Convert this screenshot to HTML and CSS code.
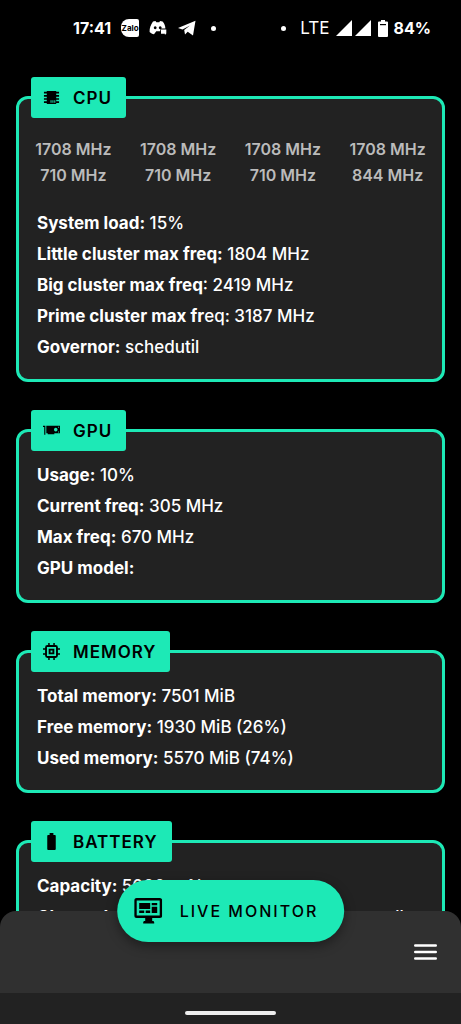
FILE: index.html
```html
<!DOCTYPE html>
<html lang="en">
<head>
<meta charset="utf-8">
<meta name="viewport" content="width=device-width, initial-scale=1">
<title>Device monitor</title>
<link rel="stylesheet" href="styles.css">
</head>
<body>
<div class="app">
  <header class="status">
    <div class="status-group status-left">
      <time>17:41</time>
      <span class="zalo">Zalo</span>
      <svg class="icon-discord" viewBox="0 0 18 16" aria-hidden="true"><path fill="#fff" fill-rule="evenodd" d="M4 1.500L6.500 1l.8 1.200h3L11 1l2.600.6c1.800 2 2.700 4.300 2.800 6.900h-3.900L11.200 9.800v1.400H7.300L5 14.300C3.300 14 1.800 13.200.6 12 .5 8 1.700 4.600 4 1.500zM6.200 6.200a1.400 1.500 0 1 0 .01 0zM11.200 6.200a1.400 1.500 0 1 0 .01 0z"/><path fill="#fff" d="M12 9.500h5.300v4l-1.400 1.600v-1.300H12z"/></svg>
      <svg class="icon-telegram" viewBox="0 0 20 16" aria-hidden="true"><path fill="#fff" d="M1 8L18.500.7 16 15.500 10.700 11.800 8 14.500 7.200 10 13 5.500 5.500 9.500z"/></svg>
      <span class="dot"></span>
    </div>
    <div class="status-group status-right">
      <span class="dot"></span>
      <span class="network">LTE</span>
      <svg class="icon-signal" viewBox="0 0 36 16" aria-hidden="true"><path fill="#fff" d="M0 16L16 0v16zM19 16L35 0v16z"/></svg>
      <svg class="icon-charge" viewBox="0 0 10 17" aria-hidden="true"><path fill="#fff" d="M3 0h4v1.500h2q1 0 1 1V16q0 1-1 1H1q-1 0-1-1V2.500q0-1 1-1h2z"/><path fill="#000" d="M2 4h6v1.200H2z"/></svg>
      <span>84%</span>
    </div>
  </header>

  <main class="content">
    <section class="card card-cpu">
      <h2 class="tag"><svg viewBox="0 0 18 18" aria-hidden="true"><path d="M4 2h10v14H4zM1 3h16v1.800H1zM1 6.300h16v1.800H1zM1 9.700h16v1.800H1zM1 13h16v1.800H1z"/><path fill="#1de9b6" d="M8 12h1v2.500H8zM10 12h1v2.500h-1zM12 12h1v2.500h-1z"/></svg>CPU</h2>
      <ul class="cores">
        <li>1708 MHz</li><li>1708 MHz</li><li>1708 MHz</li><li>1708 MHz</li>
        <li>710 MHz</li><li>710 MHz</li><li>710 MHz</li><li>844 MHz</li>
      </ul>
      <div class="rows">
        <p><b>System load:</b> 15%</p>
        <p><b>Little cluster max freq:</b> 1804 MHz</p>
        <p><b>Big cluster max freq</b>: 2419 MHz</p>
        <p><b>Prime cluster max fr</b>eq: 3187 MHz</p>
        <p><b>Governor:</b> schedutil</p>
      </div>
    </section>

    <section class="card">
      <h2 class="tag"><svg viewBox="0 0 18 18" aria-hidden="true"><path fill-rule="evenodd" d="M0 4h2.500v9.500H1.300V5.200H0zM3.500 4H18v8h-6v1H5v-1H3.500zM13.500 6.200a1.900 1.900 0 1 0 .01 0zM16 5h1v1h-1zM16 10h1v1h-1z"/></svg>GPU</h2>
      <div class="rows">
        <p><b>Usage:</b> 10%</p>
        <p><b>Current freq:</b> 305 MHz</p>
        <p><b>Max freq:</b> 670 MHz</p>
        <p><b>GPU model:</b></p>
      </div>
    </section>

    <section class="card">
      <h2 class="tag"><svg viewBox="0 0 18 18" aria-hidden="true"><path fill-rule="evenodd" d="M5.500 0h1.600v2.200h3.800V0h1.600v2.200h.8q2.500 0 2.500 2.500v.8H18v1.600h-2.200v3.800H18v1.600h-2.200v.8q0 2.500-2.500 2.500h-.8V18h-1.600v-2.200H7.100V18H5.500v-2.200h-.8q-2.500 0-2.500-2.500v-.8H0v-1.600h2.200V7.100H0V5.500h2.200v-.8q0-2.500 2.500-2.500h.8zM4.200 4.200v9.600h9.600V4.200zM6 6h6v6H6zM8 8v2h2V8z"/></svg>MEMORY</h2>
      <div class="rows">
        <p><b>Total memory:</b> 7501 MiB</p>
        <p><b>Free memory:</b> 1930 MiB (26%)</p>
        <p><b>Used memory:</b> 5570 MiB (74%)</p>
      </div>
    </section>

    <section class="card">
      <h2 class="tag"><svg viewBox="0 0 18 18" aria-hidden="true"><path d="M7 0h4v2h1.500q1 0 1 1v14q0 1-1 1h-7q-1 0-1-1V3q0-1 1-1H7z"/></svg>BATTERY</h2>
      <div class="rows">
        <p><b>Capacity:</b> 5000 mAh</p>
        <p><b>Charged capacity:</b> 4200 mAh (84%) manually</p>
      </div>
    </section>
  </main>

  <footer class="dock">
    <button class="live" type="button">
      <svg viewBox="0 0 28 26" aria-hidden="true"><path fill-rule="evenodd" d="M2.500 0h23Q28 0 28 2.500v15q0 2.500-2.500 2.500H18v3h1q1 0 1 1.500V25.500H9V24.500Q9 23 10 23h1v-3H2.500Q0 20 0 17.500v-15Q0 0 2.500 0zM2.500 2.500v15h23v-15z"/><path d="M5 5h11v6H5zM17.500 5H23v2.200h-5.500zM17.500 8.700H23V15h-5.500zM5 12.500h5V15H5zM11.500 12.500H16V15h-4.500z"/></svg>
      LIVE MONITOR
    </button>
    <button class="menu" type="button" aria-label="Menu"><svg viewBox="0 0 23 16" aria-hidden="true"><path fill="none" stroke="#fff" stroke-width="2.400" stroke-linecap="round" d="M1.200 1.500h20.600M1.200 8h20.600M1.200 14.500h20.600"/></svg></button>
  </footer>
  <div class="gesture"><span></span></div>
</div>
</body>
</html>
```

FILE: styles.css
```css
* {
  box-sizing: border-box;
}

body {
  margin: 0;
  background: #000;
  color: #fff;
  font-family: Inter, "Open Sans", sans-serif;
  font-size: 16px;
}

.app {
  display: flex;
  flex-direction: column;
  height: 100vh;
}

.status {
  flex: none;
  display: flex;
  justify-content: space-between;
  align-items: center;
  height: 56px;
  padding: 0 30px 0 73px;
  font-weight: 700;
}

.status-group {
  display: flex;
  align-items: center;
}

.status-left {
  gap: 10px;
}

.status-right {
  gap: 6px;
}

.status-right .dot {
  margin-right: 8px;
}

.dot {
  width: 5px;
  height: 5px;
  margin-left: 4px;
  border-radius: 50%;
  background: #fff;
}

.zalo {
  width: 18px;
  border-radius: 8px 2px 2px 8px;
  background: #fff;
  color: #000;
  font-size: 8px;
  line-height: 18px;
  text-align: center;
}

.network {
  font-size: 17px;
  font-weight: 400;
}

.icon-discord {
  width: 18px;
  height: 16px;
}

.icon-telegram {
  width: 20px;
  height: 16px;
}

.icon-signal {
  width: 36px;
  height: 16px;
}

.icon-charge {
  width: 10px;
  height: 17px;
}

.content {
  flex: 1;
  min-height: 0;
  overflow-y: auto;
  scrollbar-width: none;
  padding: 40px 16px 0;
}

.card {
  position: relative;
  margin-bottom: 47px;
  padding: 28px 0 16px;
  border: 3px solid #1de9b6;
  border-radius: 12px;
  background: #222;
}

.card-cpu {
  padding: 37px 0 16px;
}

.tag {
  position: absolute;
  top: -22px;
  left: 12px;
  display: flex;
  align-items: center;
  gap: 13px;
  height: 41px;
  margin: 0;
  padding: 0 14px 0 12px;
  border-radius: 3px;
  background: #1de9b6;
  color: #000;
  font-size: 17px;
  font-weight: 600;
  letter-spacing: 1px;
}

.tag svg {
  width: 17px;
  height: 17px;
}

.cores {
  display: grid;
  grid-template-columns: repeat(4, 1fr);
  margin: 0 2px 20px;
  padding: 0;
  color: #bbb;
  font-weight: 600;
  line-height: 26px;
  list-style: none;
  text-align: center;
}

.rows {
  padding: 0 18px;
  font-size: 17px;
  font-weight: 500;
  line-height: 31px;
}

.rows p {
  margin: 0;
}

.rows b {
  font-weight: 700;
}

.dock {
  position: relative;
  flex: none;
  display: flex;
  align-items: center;
  justify-content: flex-end;
  height: 82px;
  margin-top: -16px;
  padding: 0 24px;
  border-radius: 16px 16px 0 0;
  background: #303030;
}

.live {
  position: absolute;
  top: -31px;
  left: 50%;
  display: flex;
  align-items: center;
  gap: 18px;
  height: 62px;
  padding: 0 26px 0 17px;
  border: 0;
  border-radius: 31px;
  background: #1de9b6;
  box-shadow: 0 4px 12px rgba(0, 0, 0, 0.4);
  color: #000;
  font: 500 16px Inter, "Open Sans", sans-serif;
  letter-spacing: 2px;
  white-space: nowrap;
  transform: translateX(-50%);
}

.live svg {
  width: 28px;
  height: 26px;
}

.menu {
  display: flex;
  padding: 0;
  border: 0;
  background: none;
}

.menu svg {
  width: 23px;
  height: 16px;
}

.gesture {
  flex: none;
  display: flex;
  align-items: center;
  justify-content: center;
  height: 31px;
  padding-top: 8px;
  background: #222;
}

.gesture span {
  width: 91px;
  height: 4px;
  border-radius: 2px;
  background: #eee;
}
```
